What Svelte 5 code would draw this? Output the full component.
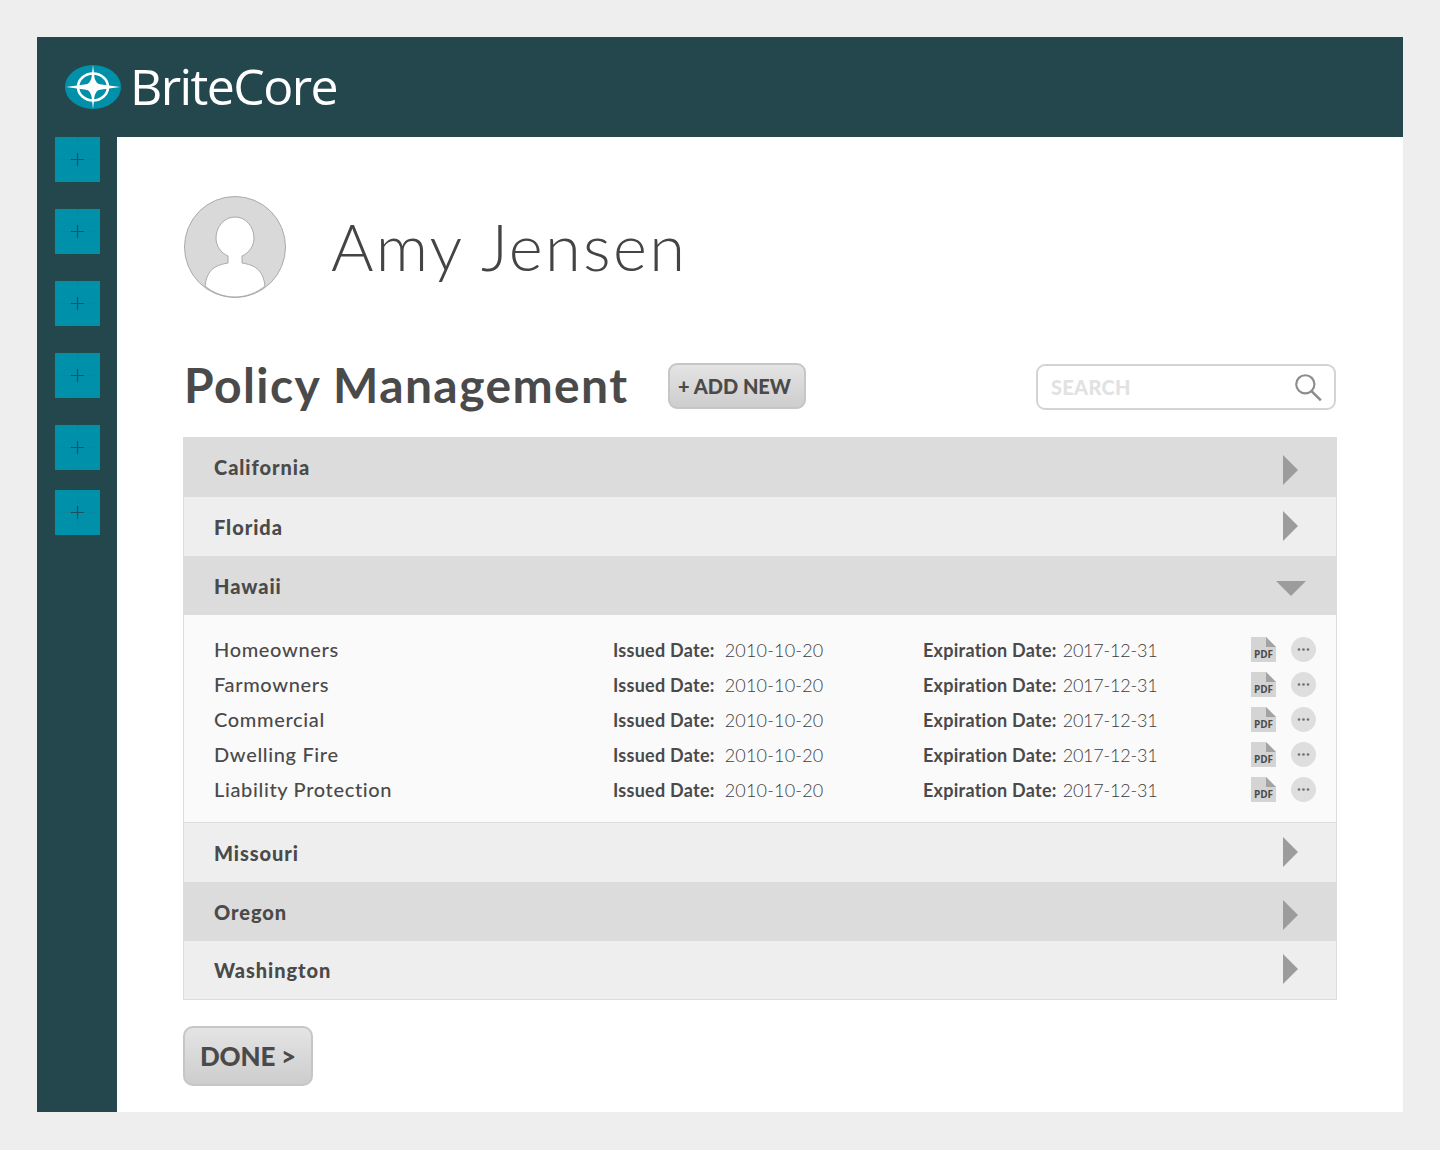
<script>
  let sideItems = [0, 1, 2, 3, 4, 5];
  let policies = ["Homeowners", "Farmowners", "Commercial", "Dwelling Fire", "Liability Protection"];
  let statesTop = [
    { name: "California", dark: true },
    { name: "Florida", dark: false },
  ];
  let statesBottom = [
    { name: "Missouri", dark: false },
    { name: "Oregon", dark: true },
    { name: "Washington", dark: false },
  ];
</script>

<div class="page">
  <div class="frame">
    <header class="topbar">
      <svg class="logo" width="56" height="46" viewBox="0 0 56 46">
        <ellipse cx="28" cy="23" rx="28" ry="22" fill="#0090a9" />
        <ellipse cx="28" cy="23" rx="15" ry="13.5" fill="none" stroke="#fff" stroke-width="2.6" />
        <path d="M28 1 L30 18 L33 20 L55 23 L33 26 L30 28 L28 45 L26 28 L23 26 L1 23 L23 20 L26 18 Z" fill="#fff" />
        <path d="M28 12 L32 19 L39 23 L32 27 L28 34 L24 27 L17 23 L24 19 Z" fill="#fff" />
      </svg>
      <span class="brand">BriteCore</span>
    </header>
    <div class="body">
      <nav class="side">
        {#each sideItems as item}
          <div class="tile">
            <svg width="45" height="45" viewBox="0 0 45 45">
              <path d="M22.5 0V45M0 22.5H45" stroke="#167c90" stroke-width="1" stroke-dasharray="1 2" fill="none" />
              <path d="M22.5 16V29M16 22.5H29" stroke="#1d5060" stroke-width="1.2" fill="none" />
            </svg>
          </div>
        {/each}
      </nav>
      <main class="content">
        <div class="profile">
          <svg class="avatar" width="102" height="102" viewBox="0 0 102 102">
            <circle cx="51" cy="51" r="50.5" fill="#d9d9d9" stroke="#aaa" stroke-width="1" />
            <path d="M21 90 C23 73 32 69 44 67 V60 C37 57 32 50 32 42 C32 31 40 21 51 21 C62 21 70 31 70 42 C70 50 65 57 58 60 V67 C70 69 79 73 81 90 C73 97 62 101 51 101 C40 101 29 97 21 90 Z" fill="#fff" stroke="#aaa" stroke-width="1" />
          </svg>
          <h1>Amy Jensen</h1>
        </div>

        <div class="toolbar">
          <h2>Policy Management</h2>
          <button class="btn add">+ ADD NEW</button>
          <div class="search">
            <span>SEARCH</span>
            <svg width="30" height="30" viewBox="0 0 28 28">
              <circle cx="11.5" cy="11.5" r="8.5" fill="none" stroke="#8d8d8d" stroke-width="2" />
              <path d="M17.5 18 L26 26.5" stroke="#8d8d8d" stroke-width="2.4" fill="none" />
            </svg>
          </div>
        </div>

        <div class="accordion">
          {#each statesTop as s}
            <div class="state" class:dark={s.dark}>
              <span>{s.name}</span>
              <i class="arrow"></i>
            </div>
          {/each}
          <div class="state dark open">
            <span>Hawaii</span>
            <i class="arrow-down"></i>
          </div>
          <div class="details">
            {#each policies as p}
              <div class="policy">
                <span class="pname">{p}</span>
                <span class="date"><b>Issued Date:</b><em class="issued">2010-10-20</em></span>
                <span class="date"><b>Expiration Date:</b><em class="expires">2017-12-31</em></span>
                <svg class="pdf" width="25" height="25" viewBox="0 0 25 25">
                  <path d="M0 0H15L25 10V25H0Z" fill="#d4d4d4" />
                  <path d="M15 0L25 10H15Z" fill="#a3a3a3" />
                  <text x="12.5" y="20.5" text-anchor="middle">PDF</text>
                </svg>
                <svg class="more" width="25" height="25" viewBox="0 0 25 25">
                  <circle cx="12.5" cy="12.5" r="12.5" fill="#dedede" />
                  <circle cx="8" cy="12.5" r="1.3" fill="#6e6e6e" />
                  <circle cx="12.5" cy="12.5" r="1.3" fill="#6e6e6e" />
                  <circle cx="17" cy="12.5" r="1.3" fill="#6e6e6e" />
                </svg>
              </div>
            {/each}
          </div>
          {#each statesBottom as s}
            <div class="state" class:dark={s.dark}>
              <span>{s.name}</span>
              <i class="arrow"></i>
            </div>
          {/each}
        </div>

        <button class="btn done">DONE &gt;</button>
      </main>
    </div>
  </div>
</div>

<style>
  :global(body) {
    background: #eeeeee;
  }

  .page {
    padding: 37px;
    height: 1150px;
    box-sizing: border-box;
    font-family: Lato, "Open Sans", sans-serif;
    color: #4a4a4a;
  }

  .frame {
    height: 1075px;
    display: flex;
    flex-direction: column;
    background: #fff;
  }

  .topbar {
    height: 100px;
    flex: none;
    background: #23474c;
    display: flex;
    align-items: center;
    padding-left: 28px;
  }

  .logo {
    margin-bottom: 1px;
  }

  .brand {
    font-family: "Open Sans", sans-serif;
    font-size: 50px;
    font-weight: 400;
    color: #fff;
    margin: 0 0 3px 9px;
    letter-spacing: -1.6px;
  }

  .body {
    flex: 1;
    display: flex;
  }

  .side {
    width: 80px;
    flex: none;
    background: #23474c;
    padding-left: 18px;
    box-sizing: border-box;
    display: flex;
    flex-direction: column;
    gap: 27px;
  }

  .tile {
    width: 45px;
    height: 45px;
    background: #0090a9;
  }

  .tile:last-child {
    margin-top: -7px;
  }

  .tile svg {
    display: block;
  }

  .content {
    flex: 1;
    padding: 59px 66px 0;
  }

  .profile {
    display: flex;
    align-items: center;
    padding-left: 1px;
  }

  .avatar {
    display: block;
  }

  h1 {
    margin: 0 0 2px 45px;
    font-size: 65px;
    font-weight: 300;
    line-height: 98px;
    letter-spacing: 2.3px;
    color: #444;
  }

  .toolbar {
    display: flex;
    align-items: center;
    margin-top: 65px;
    height: 46px;
    padding-left: 1px;
  }

  h2 {
    margin: 0 0 4px;
    font-size: 48px;
    font-weight: 700;
    letter-spacing: 1.4px;
    width: 484px;
    flex: none;
    white-space: nowrap;
  }

  .btn {
    font-family: inherit;
    font-weight: 900;
    color: #4a4a4a;
    border: 2px solid #c6c6c6;
    background: linear-gradient(#e4e4e4, #cdcdcd);
    padding: 0;
  }

  .add {
    width: 138px;
    height: 46px;
    border-radius: 9px;
    font-size: 20px;
    padding-right: 5px;
  }

  .search {
    margin: 2px 1px 0 auto;
    width: 300px;
    height: 46px;
    box-sizing: border-box;
    border: 2px solid #d4d4d4;
    border-radius: 9px;
    display: flex;
    align-items: center;
    justify-content: space-between;
    padding: 0 11px 0 13px;
    font-size: 20px;
    font-weight: 900;
    letter-spacing: 0.3px;
    color: #e2e2e2;
  }

  .accordion {
    margin-top: 28px;
    border: 1px solid #dcdcdc;
    border-top: 0;
  }

  .state {
    height: 59px;
    display: flex;
    align-items: center;
    justify-content: space-between;
    background: #eeeeee;
    padding: 0 38px 0 30px;
    font-size: 20px;
    font-weight: 900;
    letter-spacing: 0.95px;
  }

  .state:first-child {
    height: 60px;
  }

  .state:last-child {
    height: 58px;
  }

  .state.dark {
    background: #dcdcdc;
  }

  .state .arrow {
    width: 0;
    height: 0;
    border-left: 15px solid #9c9c9c;
    border-top: 15.5px solid transparent;
    border-bottom: 15.5px solid transparent;
    margin-top: -2px;
  }

  .state.dark .arrow {
    margin-top: 6px;
  }

  .arrow-down {
    width: 0;
    height: 0;
    margin: 6px -8px 0 0;
    border-top: 15px solid #9c9c9c;
    border-left: 15.5px solid transparent;
    border-right: 15.5px solid transparent;
  }

  .details {
    background: #fafafa;
    padding: 17px 20px 16px 30px;
    border-bottom: 1px solid #dcdcdc;
    height: 208px;
    box-sizing: border-box;
  }

  .policy {
    height: 35px;
    display: grid;
    grid-template-columns: 399px 310px 328px 40px 25px;
    align-items: center;
    font-size: 20px;
  }

  .pname {
    font-weight: 500;
    letter-spacing: 0.65px;
    margin-bottom: 2px;
  }

  .date {
    font-size: 18px;
    white-space: nowrap;
  }

  .date b {
    font-weight: 700;
    letter-spacing: 0.25px;
    margin-right: 6px;
  }

  .date em {
    font-style: normal;
    font-weight: 300;
    color: #3d3d3d;
  }

  .date .issued {
    margin-left: 4px;
    letter-spacing: 0.2px;
  }

  .date .expires {
    letter-spacing: -0.2px;
  }

  .pdf,
  .more {
    display: block;
  }

  .pdf text {
    font-family: "Open Sans", sans-serif;
    font-size: 10px;
    font-weight: 700;
    fill: #4a4a4a;
  }

  .done {
    display: block;
    margin-top: 26px;
    width: 130px;
    height: 60px;
    border-radius: 10px;
    font-size: 26px;
    letter-spacing: -0.2px;
  }
</style>
